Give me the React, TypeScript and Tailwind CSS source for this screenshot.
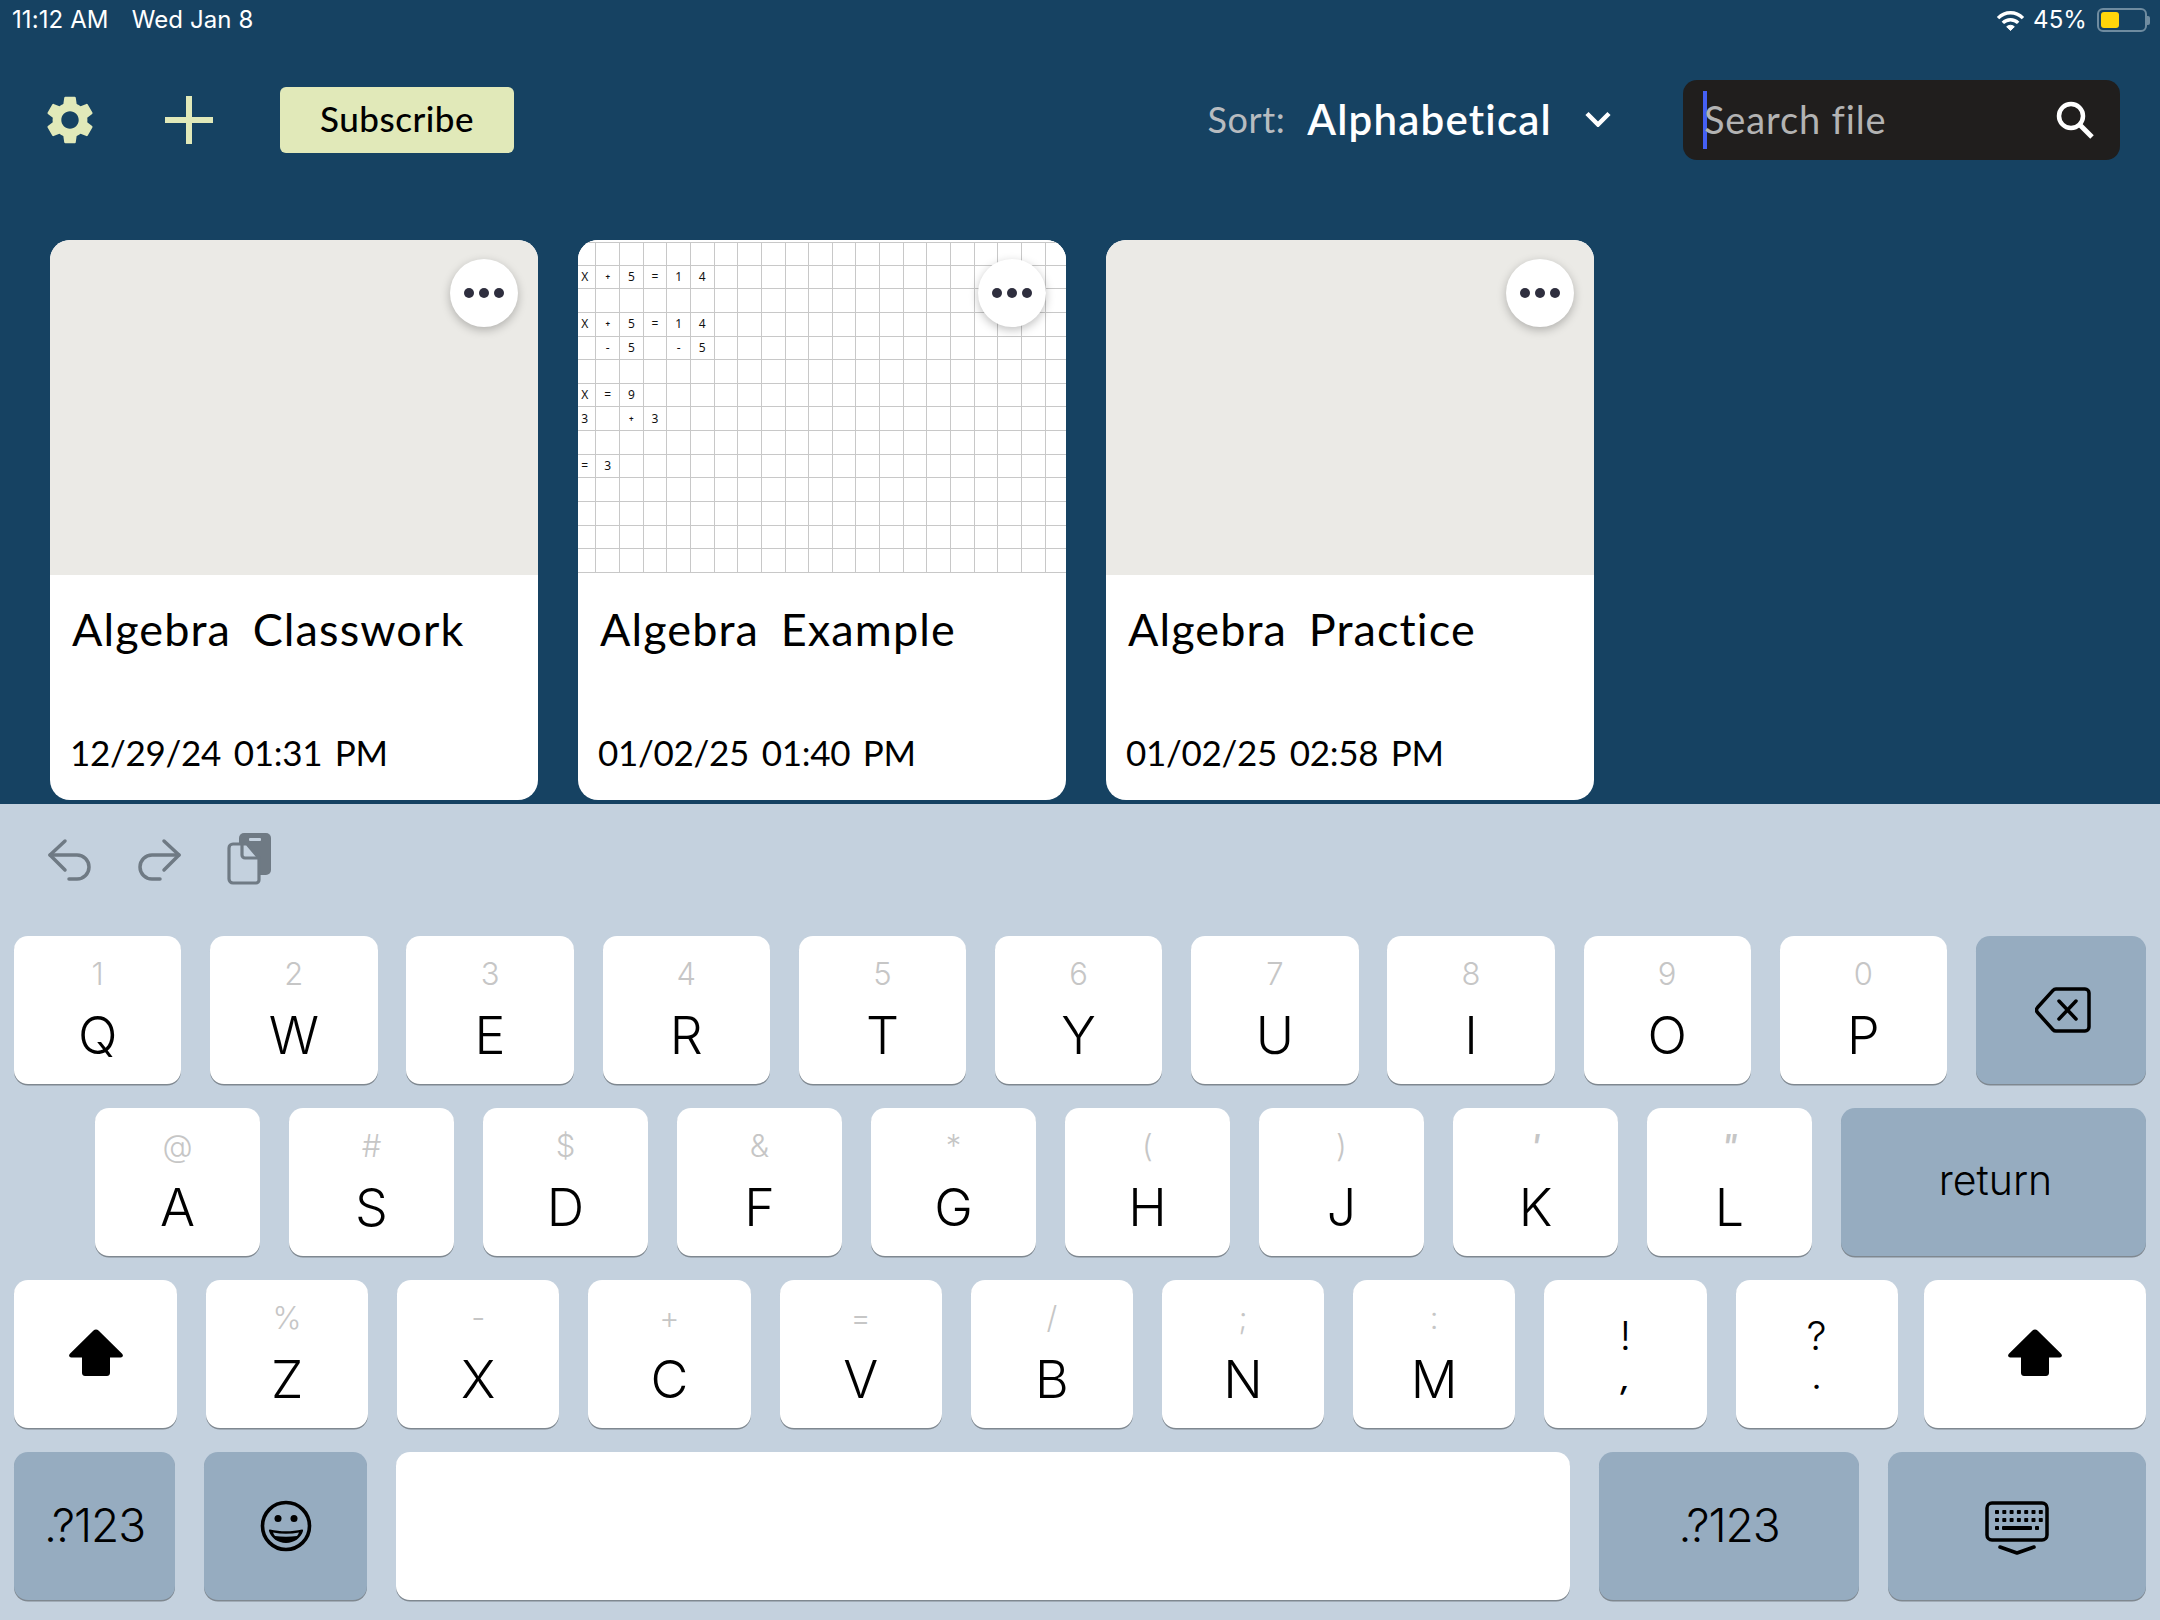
import React from "react";

const avenir = "font-['Lato','Noto_Sans',sans-serif]";

function Gear() {
  return (
    <svg viewBox="0 0 24 24" className="w-[58px] h-[58px] fill-[#e1e9b9]">
      <path d="M19.14 12.94c.04-.3.06-.61.06-.94 0-.32-.02-.64-.07-.94l2.03-1.58a.49.49 0 0 0 .12-.61l-1.92-3.32a.488.488 0 0 0-.59-.22l-2.39.96c-.5-.38-1.03-.7-1.62-.94l-.36-2.54a.484.484 0 0 0-.48-.41h-3.84c-.24 0-.43.17-.47.41l-.36 2.54c-.59.24-1.13.57-1.62.94l-2.39-.96c-.22-.08-.47 0-.59.22L2.74 8.87c-.12.21-.08.47.12.61l2.03 1.58c-.05.3-.09.63-.09.94s.02.64.07.94l-2.03 1.58a.49.49 0 0 0-.12.61l1.92 3.32c.12.22.37.29.59.22l2.39-.96c.5.38 1.03.7 1.62.94l.36 2.54c.05.24.24.41.48.41h3.84c.24 0 .44-.17.47-.41l.36-2.54c.59-.24 1.13-.56 1.62-.94l2.39.96c.22.08.47 0 .59-.22l1.92-3.32c.12-.22.07-.47-.12-.61l-2.01-1.58zM12 15.6c-1.98 0-3.6-1.62-3.6-3.6s1.62-3.6 3.6-3.6 3.6 1.62 3.6 3.6-1.62 3.6-3.6 3.6z" />
    </svg>
  );
}

function StatusBar() {
  return (
    <div className="h-[40px] flex items-center pl-[12px] pr-[10px] text-white font-['Inter',sans-serif] text-[24px] tracking-[0.1px]">
      <span>11:12 AM</span>
      <span className="ml-[23px]">Wed Jan 8</span>
      <svg viewBox="0 0 30 24" className="ml-auto w-[29px] h-[23px] fill-none stroke-white" strokeWidth="3.6">
        <path d="M2 9.5C9.5 2 20.5 2 28 9.5" />
        <path d="M7 14.5c4.5-4.5 11.5-4.5 16 0" />
        <path d="M15 22.5l-4-4c2.2-2 5.8-2 8 0z" className="fill-white" strokeWidth="1" />
      </svg>
      <span className="ml-[8px]">45%</span>
      <div className="ml-[10px] flex items-center">
        <div className="w-[50px] h-[24px] rounded-[6px] border-2 border-[#6f8ca0] p-[2px]">
          <div className="w-[18px] h-full rounded-[3px] bg-[#ffd60a]" />
        </div>
        <div className="w-[3px] h-[9px] rounded-r-[2px] bg-[#6f8ca0]" />
      </div>
    </div>
  );
}

function Toolbar() {
  return (
    <div className="h-[160px] flex items-center pl-[41px] pr-[40px]">
      <Gear />
      <svg viewBox="0 0 48 48" className="ml-[66px] w-[48px] h-[48px] stroke-[#e1e9b9]" strokeWidth="6">
        <path d="M24 0V48M0 24H48" />
      </svg>
      <button className={`ml-[67px] w-[234px] h-[66px] rounded-[6px] bg-[#e1e9b9] text-black text-[35px] leading-[60px] pb-[4px] font-medium tracking-[0.5px] ${avenir}`}>
        Subscribe
      </button>
      <div className={`ml-auto flex items-center pb-[2px] ${avenir}`}>
        <span className="text-[36px] tracking-[0.6px] text-[#b8bcc0]">Sort:</span>
        <span className="ml-[22px] text-[42px] font-semibold tracking-[1.2px] text-white">Alphabetical</span>
        <svg viewBox="0 0 26 16" className="ml-[33px] w-[26px] h-[16px] fill-none stroke-white" strokeWidth="4.5">
          <path d="M2 2.5L13 13.5L24 2.5" />
        </svg>
      </div>
      <div className="ml-[72px] w-[437px] h-[80px] rounded-[14px] bg-[#201e1d] flex items-center pl-[20px] pr-[26px]">
        <div className="w-[4px] h-[58px] bg-[#4460f5]" />
        <span className={`-ml-[3px] pb-[2px] text-[38px] tracking-[0.85px] text-[#b3b3b3] ${avenir}`}>Search file</span>
        <svg viewBox="0 0 38 38" className="ml-auto w-[38px] h-[38px] fill-none stroke-white" strokeWidth="4.5">
          <circle cx="15" cy="15" r="12" />
          <path d="M23.5 23.5L36 36" strokeWidth="5" />
        </svg>
      </div>
    </div>
  );
}

const sheet: Record<string, string> = {
  "1-0": "X", "1-1": "+", "1-2": "5", "1-3": "=", "1-4": "1", "1-5": "4",
  "3-0": "X", "3-1": "+", "3-2": "5", "3-3": "=", "3-4": "1", "3-5": "4",
  "4-1": "-", "4-2": "5", "4-4": "-", "4-5": "5",
  "6-0": "X", "6-1": "=", "6-2": "9",
  "7-0": "3", "7-2": "+", "7-3": "3",
  "9-0": "=", "9-1": "3",
};

function Sheet() {
  const rows = Array.from({ length: 14 }, (_, r) => r);
  const cols = Array.from({ length: 21 }, (_, c) => c);
  return (
    <div className="h-full bg-white pt-[2px] overflow-hidden font-['Noto_Sans',sans-serif] text-[12px] text-[#111]">
      <div className="grid grid-cols-[18.4px_repeat(20,23.65px)] auto-rows-[23.65px]">
        {rows.map((r) =>
          cols.map((c) => {
            const t = sheet[`${r}-${c}`] ?? "";
            return (
              <div
                key={`${r}-${c}`}
                className={`flex items-center justify-center border-r-[1.5px] border-b-[1.5px] border-[#c8c8c8] ${r === 0 ? "border-t-[1.5px]" : ""} ${c === 0 ? "pr-[4px]" : ""} ${t === "+" ? "text-[8px] font-bold" : ""}`}
              >
                {t}
              </div>
            );
          })
        )}
      </div>
    </div>
  );
}

function Card({ title, date, sheetView }: { title: string; date: string; sheetView?: boolean }) {
  return (
    <div className="relative w-[488px] h-[560px] rounded-[20px] bg-white overflow-hidden flex flex-col text-black">
      <div className="h-[335px] bg-[#ebeae6]">{sheetView && <Sheet />}</div>
      <div className={`flex-1 relative ${avenir}`}>
        <div className="pl-[22px] pt-[27px] text-[45px] leading-[54px] tracking-[1.1px] [word-spacing:9px]">{title}</div>
        <div className="absolute left-[20px] bottom-[25px] text-[35px] leading-[46px] tracking-[-0.3px] [word-spacing:4px]">{date}</div>
      </div>
      <div className="absolute top-[19px] right-[20px] w-[68px] h-[68px] rounded-full bg-white shadow-[0_3px_10px_rgba(0,0,0,0.25)] flex items-center justify-center gap-[5px]">
        <div className="w-[10px] h-[10px] rounded-full bg-[#2e2e3e]" />
        <div className="w-[10px] h-[10px] rounded-full bg-[#2e2e3e]" />
        <div className="w-[10px] h-[10px] rounded-full bg-[#2e2e3e]" />
      </div>
    </div>
  );
}

function Key({ main, sub, w, tick }: { main: string; sub: string; w: string; tick?: boolean }) {
  return (
    <div className={`${w} h-[148px] rounded-[14px] bg-white shadow-[0_1.5px_0_#7f8890] flex flex-col items-center pt-[20px]`}>
      <div className={`h-[36px] leading-[36px] text-[31px] text-[#c6c6c6] ${tick ? "italic font-semibold" : "font-light"}`}>{sub}</div>
      <div className="h-[64px] leading-[64px] mt-[12px] text-[52px] font-[350] text-black">{main}</div>
    </div>
  );
}

function Dark({ children, className }: { children: React.ReactNode; className: string }) {
  return (
    <div className={`${className} h-[148px] rounded-[14px] bg-[#96acc0] shadow-[0_1.5px_0_#7f8890] flex items-center justify-center text-black`}>
      {children}
    </div>
  );
}

function Shift({ className }: { className: string }) {
  return (
    <div className={`${className} h-[148px] rounded-[14px] bg-white shadow-[0_1.5px_0_#7f8890] flex items-center justify-center pb-[4px]`}>
      <svg viewBox="0 0 54 47" className="w-[54px] h-[47px] fill-black">
        <path d="M27 0.5c1 0 1.8.4 2.5 1.1l23.6 23.2c1.5 1.5.9 3.7-1.4 3.7H41v15.5c0 2-1.5 3-3 3H16c-1.5 0-3-1-3-3V28.500H2.300c-2.300 0-2.900-2.200-1.400-3.700L24.500 1.600c.7-.7 1.500-1.100 2.500-1.100z" />
      </svg>
    </div>
  );
}

function Smiley() {
  return (
    <svg viewBox="0 0 52 52" className="w-[52px] h-[52px]">
      <circle cx="26" cy="26" r="23.500" fill="none" stroke="black" strokeWidth="3.600" />
      <circle cx="18" cy="18.500" r="3.500" />
      <circle cx="34" cy="18.500" r="3.500" />
      <path d="M10 29.500c10 2.400 22 2.400 32 0 .8 0 1.300.6 1 1.500C41 38 34 43 26 43S11 38 9 31c-.3-.9.2-1.500 1-1.500z" />
      <path d="M13 32.500c8.500 1.600 17.500 1.600 26 0-.6 1.500-1.300 2.600-2 3.400-7 1.100-15 1.100-22 0-.7-.8-1.400-1.900-2-3.400z" fill="#96acc0" />
    </svg>
  );
}

function KeyboardIcon() {
  const dots = [0, 1, 2, 3, 4, 5, 6];
  return (
    <svg viewBox="0 0 64 54" className="w-[64px] h-[54px] translate-y-[2px]">
      <rect x="2" y="2" width="60" height="37" rx="5" fill="none" stroke="black" strokeWidth="3.500" />
      {dots.map((d) => (
        <rect key={`a${d}`} x={10 + d * 7.300} y="9" width="4" height="4" rx="0.800" />
      ))}
      {dots.map((d) => (
        <rect key={`b${d}`} x={10 + d * 7.300} y="17" width="4" height="4" rx="0.800" />
      ))}
      <rect x="10" y="25" width="4" height="4" rx="0.800" />
      <rect x="17" y="25" width="30" height="4" rx="1" />
      <rect x="50" y="25" width="4" height="4" rx="0.800" />
      <path d="M15 46L32 52L49 46" fill="none" stroke="black" strokeWidth="3.600" strokeLinecap="round" strokeLinejoin="round" />
    </svg>
  );
}

function Undo({ flip }: { flip?: boolean }) {
  return (
    <svg viewBox="0 0 44 44" className={`w-[44px] h-[44px] fill-none stroke-[#6f7a84] ${flip ? "-scale-x-100" : ""}`} strokeWidth="3.500" strokeLinecap="round" strokeLinejoin="round">
      <path d="M18 3L3 17L18 32" />
      <path d="M3 17H30a12 12 0 0 1 0 24H22" />
    </svg>
  );
}

function Paste() {
  return (
    <svg viewBox="0 0 44 53" className="w-[44px] h-[53px]">
      <rect x="12" y="1" width="32" height="42" rx="5" fill="#6f7a84" />
      <rect x="22" y="6" width="12" height="3" rx="1" fill="#c4d1de" />
      <path d="M6 12H20L32 26V48a3 3 0 0 1-3 3H6a4 4 0 0 1-4-4V16a4 4 0 0 1 4-4z" fill="#c4d1de" stroke="#6f7a84" strokeWidth="3.200" strokeLinejoin="round" />
      <path d="M15 13V23a3 3 0 0 0 3 3H31" fill="none" stroke="#6f7a84" strokeWidth="3.200" />
    </svg>
  );
}

const row1 = [["Q", "1"], ["W", "2"], ["E", "3"], ["R", "4"], ["T", "5"], ["Y", "6"], ["U", "7"], ["I", "8"], ["O", "9"], ["P", "0"]];
const row2 = [["A", "@"], ["S", "#"], ["D", "$"], ["F", "&"], ["G", "*"], ["H", "("], ["J", ")"], ["K", "'"], ["L", "\""]];
const row3 = [["Z", "%"], ["X", "-"], ["C", "+"], ["V", "="], ["B", "/"], ["N", ";"], ["M", ":"]];

function Keyboard() {
  return (
    <div className="h-[816px] bg-[#c4d1de] font-['Inter',sans-serif]">
      <div className="h-[132px] flex items-center pl-[47px] pb-[20px]">
        <Undo />
        <div className="ml-[47px]"><Undo flip /></div>
        <div className="ml-[45px] mb-[4px]"><Paste /></div>
      </div>
      <div className="pl-[14px] pr-[14px] flex flex-col gap-[24px]">
        <div className="flex gap-[28.800px]">
          {row1.map(([m, s]) => <Key key={m} main={m} sub={s} w="w-[167.400px]" />)}
          <Dark className="flex-1 pl-[4px]">
            <svg viewBox="0 0 56 46" className="w-[56px] h-[46px] fill-none stroke-black" strokeWidth="3.500" strokeLinejoin="round" strokeLinecap="round">
              <path d="M21 2H50a4 4 0 0 1 4 4V40a4 4 0 0 1-4 4H21a4 4 0 0 1-3-1.300L2.500 25.500a4 4 0 0 1 0-5L18 3.300A4 4 0 0 1 21 2z" />
              <path d="M24 14L41 32M41 14L24 32" />
            </svg>
          </Dark>
        </div>
        <div className="flex gap-[29px] pl-[81px]">
          {row2.map(([m, s]) => <Key key={m} main={m} sub={s} w="w-[165px]" tick={m === "K" || m === "L"} />)}
          <Dark className="flex-1 text-[41px] font-[350] pl-[4px] pb-[3px]">return</Dark>
        </div>
        <div className="flex gap-[29px]">
          <Shift className="w-[163px]" />
          {row3.map(([m, s]) => <Key key={m} main={m} sub={s} w="w-[162.200px]" />)}
          <div className="w-[162.200px] h-[148px] rounded-[14px] bg-white shadow-[0_1.5px_0_#7f8890] flex flex-col items-center pt-[31px] text-black">
            <span className="text-[40px] leading-[49px] font-light">!</span>
            <span className="text-[30px] leading-[37px] font-semibold italic">,</span>
          </div>
          <div className="w-[162.200px] h-[148px] rounded-[14px] bg-white shadow-[0_1.5px_0_#7f8890] flex flex-col items-center pt-[31px] text-black">
            <span className="text-[40px] leading-[49px] font-light">?</span>
            <span className="text-[30px] leading-[37px] font-medium">.</span>
          </div>
          <Shift className="flex-1 -ml-[3px]" />
        </div>
        <div className="flex gap-[29px]">
          <Dark className="w-[161px] text-[46px] font-[350] tracking-[-1px] pb-[2px]">.?123</Dark>
          <Dark className="w-[163px]"><Smiley /></Dark>
          <div className="w-[1174px] h-[148px] rounded-[14px] bg-white shadow-[0_1.5px_0_#7f8890]" />
          <Dark className="w-[260px] text-[46px] font-[350] tracking-[-1px] pb-[2px]">.?123</Dark>
          <Dark className="flex-1"><KeyboardIcon /></Dark>
        </div>
      </div>
    </div>
  );
}

export default function App() {
  return (
    <div className="w-[2160px] h-[1620px] overflow-hidden">
      <div className="h-[804px] bg-[#164262] overflow-hidden">
        <StatusBar />
        <Toolbar />
        <div className="pt-[40px] pl-[50px] flex gap-[40px]">
          <Card title="Algebra Classwork" date="12/29/24 01:31 PM" />
          <Card title="Algebra Example" date="01/02/25 01:40 PM" sheetView />
          <Card title="Algebra Practice" date="01/02/25 02:58 PM" />
        </div>
      </div>
      <Keyboard />
    </div>
  );
}
